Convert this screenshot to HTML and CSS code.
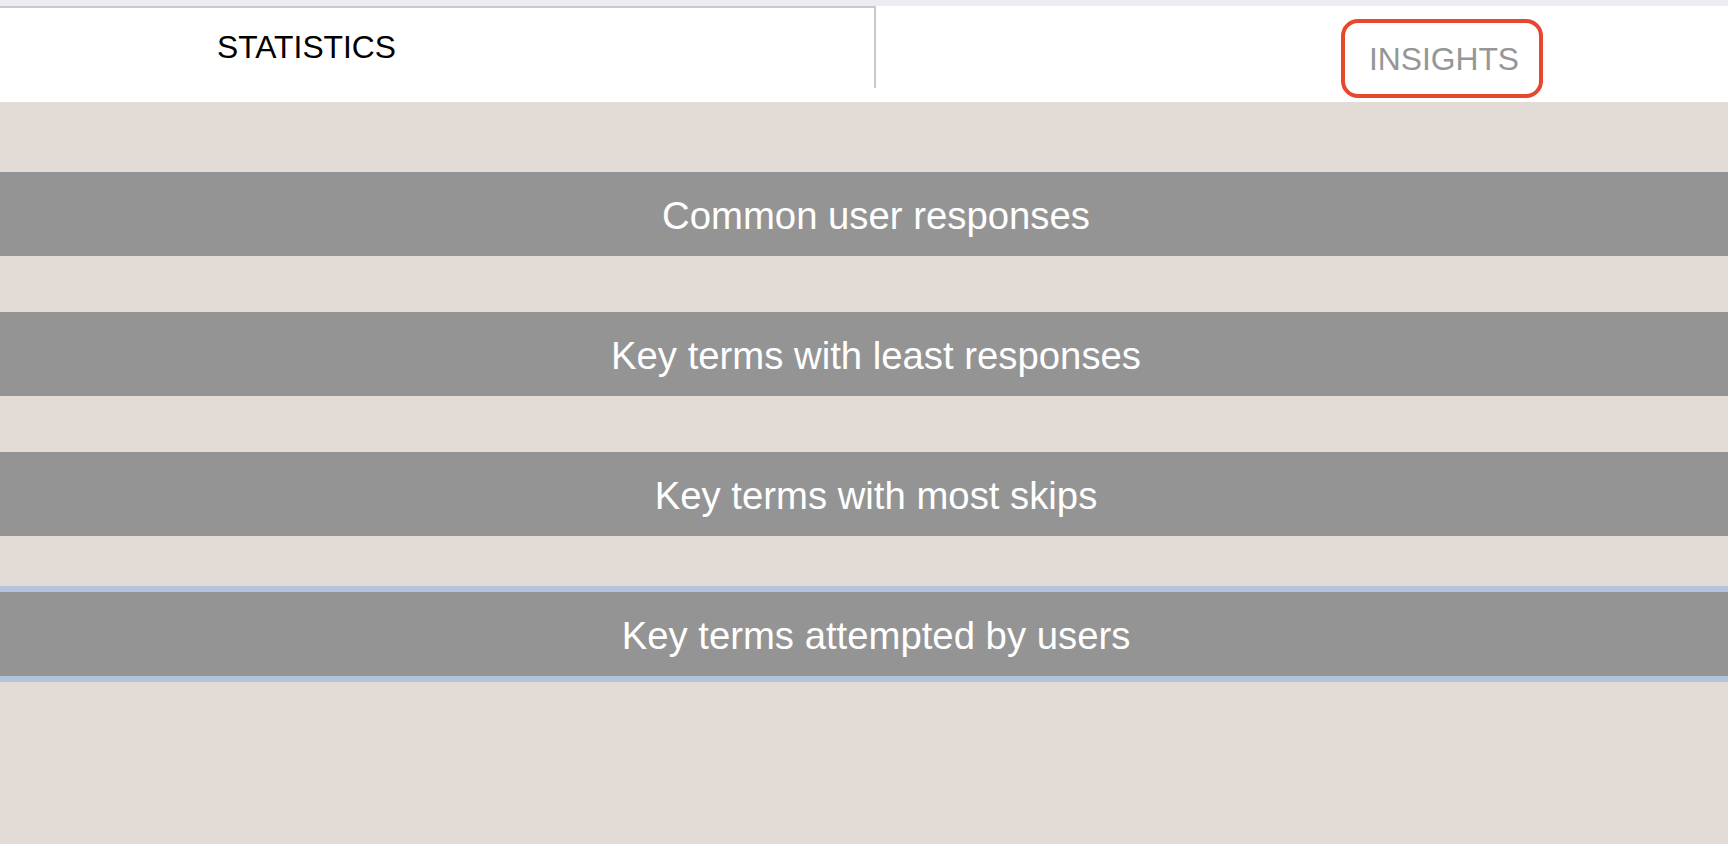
FILE: index.html
```html
<!DOCTYPE html>
<html lang="en">
<head>
<meta charset="utf-8">
<title>Insights</title>
<link rel="stylesheet" href="styles.css">
</head>
<body>
<div class="top-strip"></div>
<div class="tabs">
  <div class="tab-stats">STATISTICS</div>
  <div class="tab-right">
    <div class="btn-insights">INSIGHTS</div>
  </div>
</div>
<div class="bars">
  <div class="bar">Common user responses</div>
  <div class="bar">Key terms with least responses</div>
  <div class="bar">Key terms with most skips</div>
  <div class="bar bar-focus">Key terms attempted by users</div>
</div>
</body>
</html>
```
FILE: styles.css
```css
html, body {
  margin: 0;
  padding: 0;
}
body {
  background: #e3dcd6;
  font-family: "Liberation Sans", Arial, Helvetica, sans-serif;
  min-height: 844px;
  overflow: hidden;
}
.top-strip {
  height: 6px;
  background: #ecedf2;
}
.tabs {
  display: flex;
  height: 96px;
  background: #ffffff;
}
.tab-stats {
  box-sizing: border-box;
  width: 876px;
  height: 82px;
  border-top: 2px solid #c9c9c9;
  border-right: 2px solid #c9c9c9;
  padding-top: 22px;
  padding-left: 217px;
  font-size: 31.8px;
  line-height: 35px;
  color: #000;
}
.tab-right {
  flex: 1;
  padding-top: 13px;
  padding-left: 465px;
}
.btn-insights {
  box-sizing: border-box;
  width: 202px;
  height: 79px;
  border: 4px solid #e8472d;
  border-radius: 17px;
  display: flex;
  align-items: center;
  justify-content: center;
  padding-left: 4px;
  padding-top: 1px;
  font-size: 31.8px;
  color: #969696;
}
.bars {
  display: flex;
  flex-direction: column;
  gap: 56px;
  padding-top: 70px;
}
.bar {
  box-sizing: border-box;
  height: 84px;
  background: #949494;
  color: #ffffff;
  font-size: 38.3px;
  display: flex;
  align-items: center;
  justify-content: center;
  padding-left: 24px;
  padding-top: 4px;
}
.bar-focus {
  outline: 6px solid #b4c3dc;
}
```
